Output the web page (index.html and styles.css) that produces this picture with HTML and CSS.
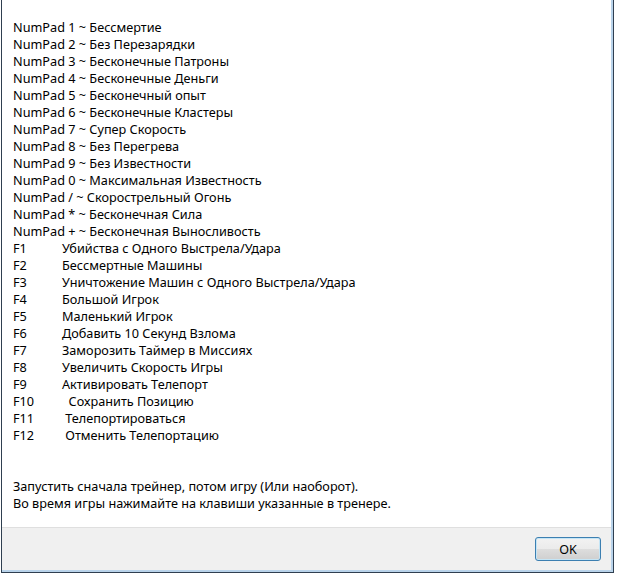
FILE: index.html
```html
<!DOCTYPE html>
<html lang="ru">
    <head>
        <meta charset="UTF-8">
        <title>Trainer</title>
        <link rel="stylesheet" href="styles.css">
    </head>
    <body>
        <div class="window">
            <div class="client">
                <div class="content">
                    <pre class="info">NumPad 1 ~ Бессмертие
NumPad 2 ~ Без Перезарядки
NumPad 3 ~ Бесконечные Патроны
NumPad 4 ~ Бесконечные Деньги
NumPad 5 ~ Бесконечный опыт
NumPad 6 ~ Бесконечные Кластеры
NumPad 7 ~ Супер Скорость
NumPad 8 ~ Без Перегрева
NumPad 9 ~ Без Известности
NumPad 0 ~ Максимальная Известность
NumPad / ~ Скорострельный Огонь
NumPad * ~ Бесконечная Сила
NumPad + ~ Бесконечная Выносливость
F1	Убийства с Одного Выстрела/Удара
F2	Бессмертные Машины
F3	Уничтожение Машин с Одного Выстрела/Удара
F4	Большой Игрок
F5	Маленький Игрок
F6	Добавить 10 Секунд Взлома
F7	Заморозить Таймер в Миссиях
F8	Увеличить Скорость Игры
F9	Активировать Телепорт
F10	  Сохранить Позицию
F11	 Телепортироваться
F12	 Отменить Телепортацию


Запустить сначала трейнер, потом игру (Или наоборот).
Во время игры нажимайте на клавиши указанные в тренере.</pre>
                </div>
                <div class="footer">
                    <button class="btn">OK</button>
                </div>
            </div>
        </div>
    </body>
</html>
```

FILE: styles.css
```css
* {
    margin: 0; padding: 0; box-sizing: border-box;
}

html, body {
    width: 100%;
    height: 100%;
    background-color: #fff;
    font-family: "Noto Sans", sans-serif;
    font-size: 12px;
    color: #000;
    overflow: hidden;
}

.window {
    margin-left: 1px;
    width: 613px;
    height: 573px;
    border-left: 1px solid #2f3f50;
    border-right: 1px solid #2f3f50;
    border-bottom: 1px solid #2f3f50;
}

.client {
    height: 100%;
    display: flex;
    flex-direction: column;
    border-right: 2px solid #b9d3ea;
    border-bottom: 2px solid #b9d3ea;
}

.content {
    height: 527px;
    padding: 19px 0 0 11px;
    background-color: #fff;
}

.info {
    font-family: "Noto Sans", sans-serif;
    font-size: 12.7px;
    line-height: 17px;
    white-space: pre;
    tab-size: 49px;
}

.footer {
    flex: 1;
    display: flex;
    align-items: center;
    justify-content: flex-end;
    padding-right: 10px;
    background-color: #f0f0f0;
    border-top: 1px solid #dfdfdf;
}

.btn {
    width: 66px;
    height: 24px;
    font-family: "Noto Sans", sans-serif;
    font-size: 12.5px;
    color: #000;
    border: 1px solid #3c7fb1;
    border-radius: 3px;
    box-shadow: inset 0 0 0 1px #c4e5f6;
    background: linear-gradient(#f2f2f2 0%, #ebebeb 50%, #dddddd 51%, #cfcfcf 100%);
}
```
